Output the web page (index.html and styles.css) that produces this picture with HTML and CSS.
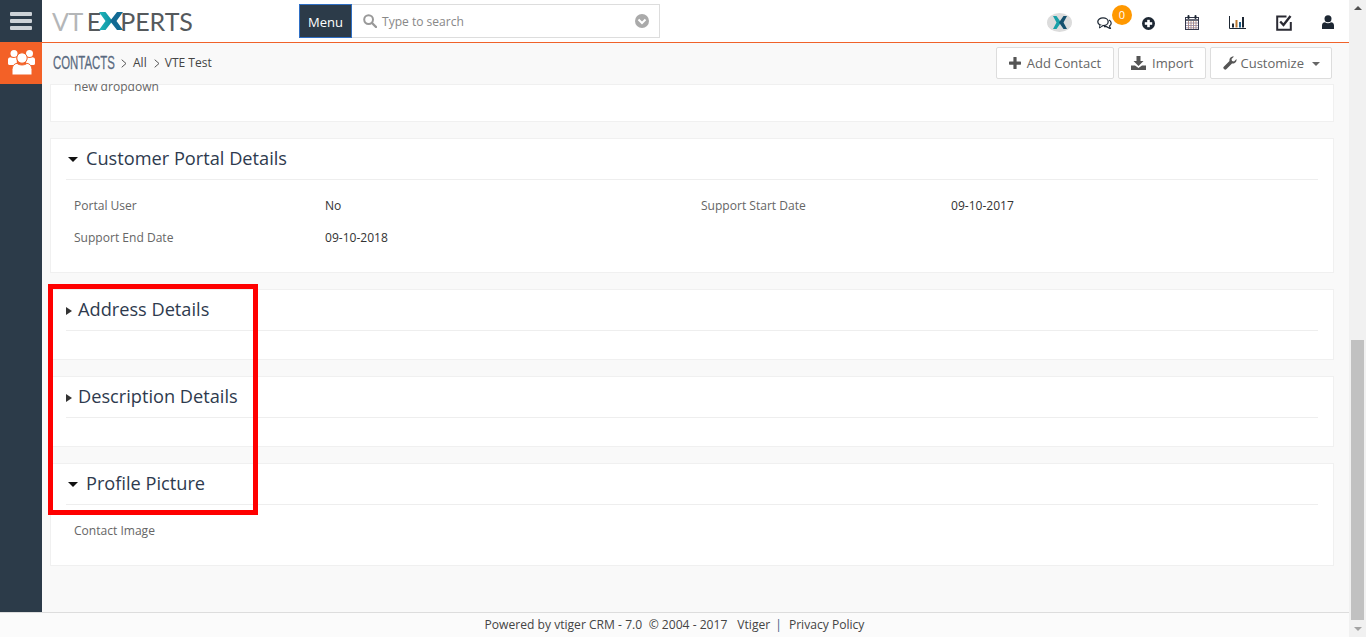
FILE: index.html
```html
<!DOCTYPE html>
<html lang="en">
<head>
<meta charset="utf-8">
<title>Contacts - VTE Test</title>
<link rel="stylesheet" href="styles.css">
</head>
<body>
<div class="page">
  <div class="viewport">
    <header class="topbar">
      <div class="hamburger"><span></span><span></span><span></span></div>
      <div class="logo">
        <span class="logo-light">VT</span><span class="logo-dark logo-e">E</span><svg class="logo-x" width="24" height="18" viewBox="0 0 24 18"><defs><linearGradient id="xteal" x1="0" y1="0" x2="1" y2="0"><stop offset="0" stop-color="#1fb6b8"/><stop offset="1" stop-color="#0d8fa3"/></linearGradient></defs><polygon points="0,0 6.500,0 13.500,9 6.500,18 0,18 6.500,9" fill="url(#xteal)"/><polygon points="24,0 18,0 11,9 18,18 24,18 17.500,9" fill="#126a94"/></svg><span class="logo-dark logo-rest">PERTS</span>
      </div>
      <div class="search">
        <button class="menu-btn">Menu</button>
        <div class="search-box">
          <svg class="search-icon" width="14" height="14" viewBox="0 0 14 14"><circle cx="5.600" cy="5.600" r="4.400" fill="none" stroke="#999" stroke-width="2"/><line x1="9" y1="9" x2="13" y2="13" stroke="#999" stroke-width="2.400" stroke-linecap="round"/></svg>
          <span class="placeholder">Type to search</span>
          <svg class="search-caret" width="14" height="14" viewBox="0 0 14 14"><circle cx="7" cy="7" r="7" fill="#aaa"/><polyline points="3.500,5.500 7,9 10.500,5.500" fill="none" stroke="#fff" stroke-width="2"/></svg>
        </div>
      </div>
      <div class="top-icons">
        <svg class="ic-brand" width="25" height="19" viewBox="0 0 25 19"><ellipse cx="12.500" cy="9.500" rx="12.500" ry="9.500" fill="#dcdcdc"/><polygon points="6,3 9.500,3 14,9.500 9.500,16 6,16 9.500,9.500" fill="#17a0a8"/><polygon points="20,3 16.500,3 12,9.500 16.500,16 20,16 16.500,9.500" fill="#14506e"/></svg>
        <div class="chat">
          <svg width="15" height="12" viewBox="0 0 15 12"><ellipse cx="6" cy="4.700" rx="5.200" ry="3.900" fill="#fff" stroke="#1d2733" stroke-width="1.300"/><path d="M3 8 L2.500 11 L6 8.600" fill="#fff" stroke="#1d2733" stroke-width="1"/><path d="M12 3 C14.800 4.500 14.800 7.500 12.500 9 L13.500 11.800 L9.500 9.600 L7 9.600" fill="none" stroke="#1d2733" stroke-width="1.200"/></svg>
          <span class="badge">0</span>
        </div>
        <svg class="ic-plus" width="13" height="13" viewBox="0 0 13 13"><circle cx="6.500" cy="6.500" r="6.500" fill="#1d2733"/><rect x="2.800" y="5.200" width="7.400" height="2.600" fill="#fff"/><rect x="5.200" y="2.800" width="2.600" height="7.400" fill="#fff"/></svg>
        <svg class="ic-cal" width="14" height="15" viewBox="0 0 14 15"><rect x="0.500" y="2.500" width="13" height="12" fill="#fff" stroke="#33374a"/><path d="M0.500 5H13.500" stroke="#33374a" stroke-width="1.500"/><rect x="2.500" y="0" width="2" height="4" rx="1" fill="#1d2733"/><rect x="9.500" y="0" width="2" height="4" rx="1" fill="#1d2733"/><path d="M3.500 6v8M6 6v8M8.500 6v8M11 6v8" stroke="#a9785e" stroke-width="0.800" fill="none"/><path d="M1 8h12M1 10.500h12M1 12.800h12" stroke="#8c7fa0" stroke-width="0.800" fill="none"/></svg>
        <svg class="ic-chart" width="17" height="13" viewBox="0 0 17 13"><path d="M0.500 0V12.500H17" fill="none" stroke="#1d2733"/><rect x="3" y="7.500" width="2" height="4" fill="#1d2733"/><rect x="6.500" y="4" width="2" height="7.500" fill="#b9772f"/><rect x="10" y="6" width="2" height="5.500" fill="#1d5f8a"/><rect x="13" y="1" width="2" height="10.500" fill="#1d2733"/></svg>
        <svg class="ic-check" width="16" height="16" viewBox="0 0 16 16"><path d="M14.800 7V14.800H1.200V1.500H10.500" fill="none" stroke="#2a2a33" stroke-width="2"/><polyline points="4.200,6.500 7.500,10 14.500,1" fill="none" stroke="#2a2a33" stroke-width="2.400"/></svg>
        <svg class="ic-user" width="12" height="14" viewBox="0 0 12 14"><circle cx="6" cy="3.800" r="3.500" fill="#1d2733"/><path d="M0 14V10.500C0 8.500 1.500 7.300 3 7.300C4.500 8.500 7.500 8.500 9 7.300C10.500 7.300 12 8.500 12 10.500V14Z" fill="#1d2733"/></svg>
      </div>
    </header>
    <div class="below">
      <aside class="sidebar">
        <div class="module-tile">
          <svg width="27" height="25" viewBox="0 0 27 25" fill="#fff"><circle cx="6" cy="3.500" r="3.500"/><circle cx="21.500" cy="3.500" r="3.500"/><path d="M0 9.500C0 8 1.500 7.200 2.500 7.200C4 8.200 7 8.200 8.500 7.200L9 15H2C1 15 0 14.500 0 13.500Z"/><path d="M27 9.500C27 8 25.500 7.200 24.500 7.200C23 8.200 20 8.200 18.500 7.200L18 15H25C26 15 27 14.500 27 13.500Z"/><circle cx="14" cy="8" r="5.200" stroke="#f36127" stroke-width="1"/><path d="M4 25V19.500C4 16 6.500 13.500 9 13.300C11.500 15.500 16.500 15.500 19 13.300C21.500 13.500 24 16 24 19.500V25Z" stroke="#f36127" stroke-width="1"/></svg>
        </div>
      </aside>
      <div class="main">
        <div class="crumbbar">
          <div class="crumbs">
            <span class="crumb-module">CONTACTS</span>
            <svg class="crumb-sep" width="6" height="9" viewBox="0 0 6 9"><polyline points="0.700,0.700 5,4.500 0.700,8.300" fill="none" stroke="#555" stroke-width="1"/></svg>
            <span class="crumb-link">All</span>
            <svg class="crumb-sep" width="6" height="9" viewBox="0 0 6 9"><polyline points="0.700,0.700 5,4.500 0.700,8.300" fill="none" stroke="#555" stroke-width="1"/></svg>
            <span class="crumb-record">VTE Test</span>
          </div>
          <div class="actions">
            <button class="btn">
              <svg width="12" height="12" viewBox="0 0 12 12"><rect x="0" y="4.500" width="12" height="3.200" rx="0.600" fill="#555"/><rect x="4.400" y="0" width="3.200" height="12" rx="0.600" fill="#555"/></svg>
              Add Contact
            </button>
            <button class="btn">
              <svg width="15" height="14" viewBox="0 0 15 14"><path d="M5.500 0H9.500V5H12.500L7.500 10L2.500 5H5.500Z" fill="#555"/><path d="M0 9.500H4L7.500 12L11 9.500H15V14H0Z" fill="#555"/></svg>
              Import
            </button>
            <button class="btn btn-menu">
              <svg width="14" height="14" viewBox="0 0 14 14"><path d="M1 13C0 12 0 11.500 1 10.500L6.500 5C6 2.500 8 0 11 0.500L8.500 3L9 5L11 5.500L13.500 3C14 6 11.500 8 9 7.500L3.500 13C2.500 14 2 14 1 13Z" fill="#555"/></svg>
              <span>Customize</span>
              <span class="caret"></span>
            </button>
          </div>
        </div>
        <div class="content">
          <section class="panel panel-clipped">
            <div class="field-row"><span class="label">new dropdown</span></div>
          </section>
          <section class="panel panel-portal">
            <h2 class="panel-title title-open"><span class="tri-down"></span>Customer Portal Details</h2>
            <div class="fields">
              <span class="label">Portal User</span><span class="value">No</span>
              <span class="label">Support Start Date</span><span class="value">09-10-2017</span>
              <span class="label">Support End Date</span><span class="value">09-10-2018</span>
            </div>
          </section>
          <section class="panel panel-closed">
            <h2 class="panel-title title-closed"><span class="tri-right"></span>Address Details</h2>
          </section>
          <section class="panel panel-closed">
            <h2 class="panel-title title-closed"><span class="tri-right"></span>Description Details</h2>
          </section>
          <section class="panel panel-picture">
            <h2 class="panel-title title-open"><span class="tri-down"></span>Profile Picture</h2>
            <div class="fields"><span class="label">Contact Image</span></div>
          </section>
          <div class="highlight"></div>
        </div>
      </div>
    </div>
    <footer class="footer">
      <span>Powered by vtiger CRM - 7.0</span>
      <span class="footer-copy">© 2004 - 2017</span>
      <span class="footer-vendor">Vtiger</span>
      <span class="footer-bar">|</span>
      <span>Privacy Policy</span>
    </footer>
  </div>
  <div class="scrollbar">
    <span class="sb-up"></span>
    <div class="sb-track"><div class="sb-thumb"></div></div>
    <span class="sb-down"></span>
  </div>
</div>
</body>
</html>
```
FILE: styles.css
```css
* { box-sizing: border-box; }
html, body { margin: 0; height: 100%; overflow: hidden; }
body { font-family: "Open Sans", sans-serif; font-size: 12.060px; color: #333; background: #f9f9f9; }
.page { display: flex; width: 1366px; height: 637px; }
.viewport { flex: 1; min-width: 0; display: flex; flex-direction: column; }

.topbar { height: 43px; flex: none; display: flex; align-items: center; background: #fff; border-bottom: 1px solid #f0622a; position: relative; }
.hamburger { width: 42px; height: 42px; flex: none; background: #2c3b49; display: flex; flex-direction: column; gap: 3px; padding: 12px 10px 0; }
.hamburger span { display: block; height: 4px; border-radius: 1px; background: #cdd2d7; }
.logo { width: 257px; flex: none; padding-left: 10px; display: flex; align-items: center; font-family: "Lato", sans-serif; font-size: 25px; font-weight: 400; }
.logo-light { color: #b4b6b8; letter-spacing: -0.500px; }
.logo-dark { color: #55595c; }
.logo-e { margin-left: 4px; margin-right: -2px; }
.logo-x { margin: 0; flex: none; }
.logo-rest { margin-left: -3px; }
.search { display: flex; height: 34px; margin-top: -1px; width: 361px; flex: none; }
.menu-btn { width: 53px; border: 1px solid #2f6fc4; background: #2c3b49; color: #fff; font: 13px "Open Sans", sans-serif; padding: 2px 0 0; }
.search-box { flex: 1; display: flex; align-items: center; border: 1px solid #ddd; border-left: 0; padding: 0 10px 0 11px; background: #fff; }
.search-icon { flex: none; }
.placeholder { flex: 1; margin-left: 5px; padding-top: 2px; color: #888; }
.top-icons { flex: 1; position: relative; height: 42px; }
.top-icons > * { position: absolute; }
.ic-brand { left: 387px; top: 13px; }
.chat { left: 437px; top: 17px; width: 15px; height: 12px; }
.chat svg { display: block; }
.badge { position: absolute; left: 15px; top: -12px; width: 20px; height: 20px; border-radius: 50%; background: #ff9800; color: #fff; font-size: 11px; line-height: 19px; text-align: center; }
.ic-plus { left: 482px; top: 17px; }
.ic-cal { left: 525px; top: 15px; }
.ic-chart { left: 569px; top: 16px; }
.ic-check { left: 616px; top: 15px; }
.ic-user { left: 662px; top: 15px; }

.below { flex: 1; min-height: 0; display: flex; }
.sidebar { width: 42px; flex: none; background: #2c3b49; }
.module-tile { height: 41px; background: #f36127; display: flex; align-items: flex-start; justify-content: center; padding-top: 7px; }
.main { flex: 1; min-width: 0; display: flex; flex-direction: column; }
.crumbbar { height: 41px; flex: none; display: flex; align-items: center; justify-content: space-between; background: #f9f9f9; padding: 0 17px 0 11px; position: relative; z-index: 1; }
.crumbs { display: flex; align-items: center; color: #444; margin-top: -2px; }
.crumb-module { display: block; font-family: "Liberation Sans", sans-serif; font-size: 19px; color: #596a80; width: 61px; white-space: nowrap; transform: scaleX(0.600); transform-origin: left center; -webkit-text-stroke: 0.300px #596a80; margin-right: 7px; }
.crumb-sep { flex: none; margin-right: 6px; margin-top: 1px; }
.crumb-link { margin-right: 7px; }
.crumb-record { margin-left: -1px; }
.actions { display: flex; gap: 4px; margin-top: -2px; }
.btn { height: 32px; display: flex; align-items: center; gap: 6px; padding: 0 12px; background: #fff; border: 1px solid #ddd; border-radius: 2px; color: #666; font: 13px "Open Sans", sans-serif; }
.btn-menu { gap: 0; padding: 0 11px 0 12px; }
.btn-menu span:not(.caret) { margin: 0 8px 0 3px; }
.caret { width: 0; height: 0; margin-top: 2px; border-left: 4px solid transparent; border-right: 4px solid transparent; border-top: 4px solid #666; }

.content { flex: 1; min-height: 0; overflow: hidden; position: relative; padding: 0 15px 0 8px; display: flex; flex-direction: column; gap: 16px; }
.panel { background: #fff; border: 1px solid #f0f0f0; flex: none; padding: 0 15px; }
.panel-clipped { height: 38px; padding: 0 23px; position: relative; }
.field-row { margin-top: -6px; line-height: 16px; }
.panel-portal { height: 135px; }
.panel-closed { height: 71px; }
.panel-picture { height: 103px; }
.panel-title { margin: 0; height: 41px; padding-bottom: 2px; border-bottom: 1px solid #eee; display: flex; align-items: center; font-size: 18.200px; font-weight: 400; color: #2e3a4e; }
.tri-down { width: 0; height: 0; border-left: 5px solid transparent; border-right: 5px solid transparent; border-top: 5px solid #111; margin: 3px 8px 0 2px; }
.tri-right { width: 0; height: 0; border-top: 4px solid transparent; border-bottom: 4px solid transparent; border-left: 6px solid #333; margin: 4px 6px 0 0; }
.fields { display: grid; grid-template-columns: 251px 376px 250px 1fr; row-gap: 16px; padding: 18px 0 0 8px; line-height: 16px; }
.label { color: #666; }
.value { color: #333; }
.highlight { position: absolute; left: 6px; top: 200px; width: 210px; height: 231px; border: 5px solid #f00; }

.footer { height: 25px; flex: none; background: #fbfbfb; border-top: 1px solid #ddd; display: flex; justify-content: center; align-items: center; padding-bottom: 2px; color: #444; font-size: 12.100px; }
.footer-copy { margin-left: 6.500px; }
.footer-vendor { margin-left: 10px; }
.footer-bar { color: #3c5a85; margin: 0 7px 0 5px; }

.scrollbar { width: 17px; flex: none; background: #f1f1f1; display: flex; flex-direction: column; align-items: center; position: relative; }
.sb-track { flex: 1; width: 100%; position: relative; padding: 323px 1px 0 1px; }
.sb-thumb { height: 280px; background: #c1c1c1; margin: 17px 1px 0 1px; }
.sb-up, .sb-down { position: absolute; width: 0; height: 0; border-left: 4px solid transparent; border-right: 4px solid transparent; }
.sb-up { top: 6px; border-bottom: 4px solid #505050; }
.sb-down { bottom: 6px; border-top: 4px solid #a3a3a3; }
```
